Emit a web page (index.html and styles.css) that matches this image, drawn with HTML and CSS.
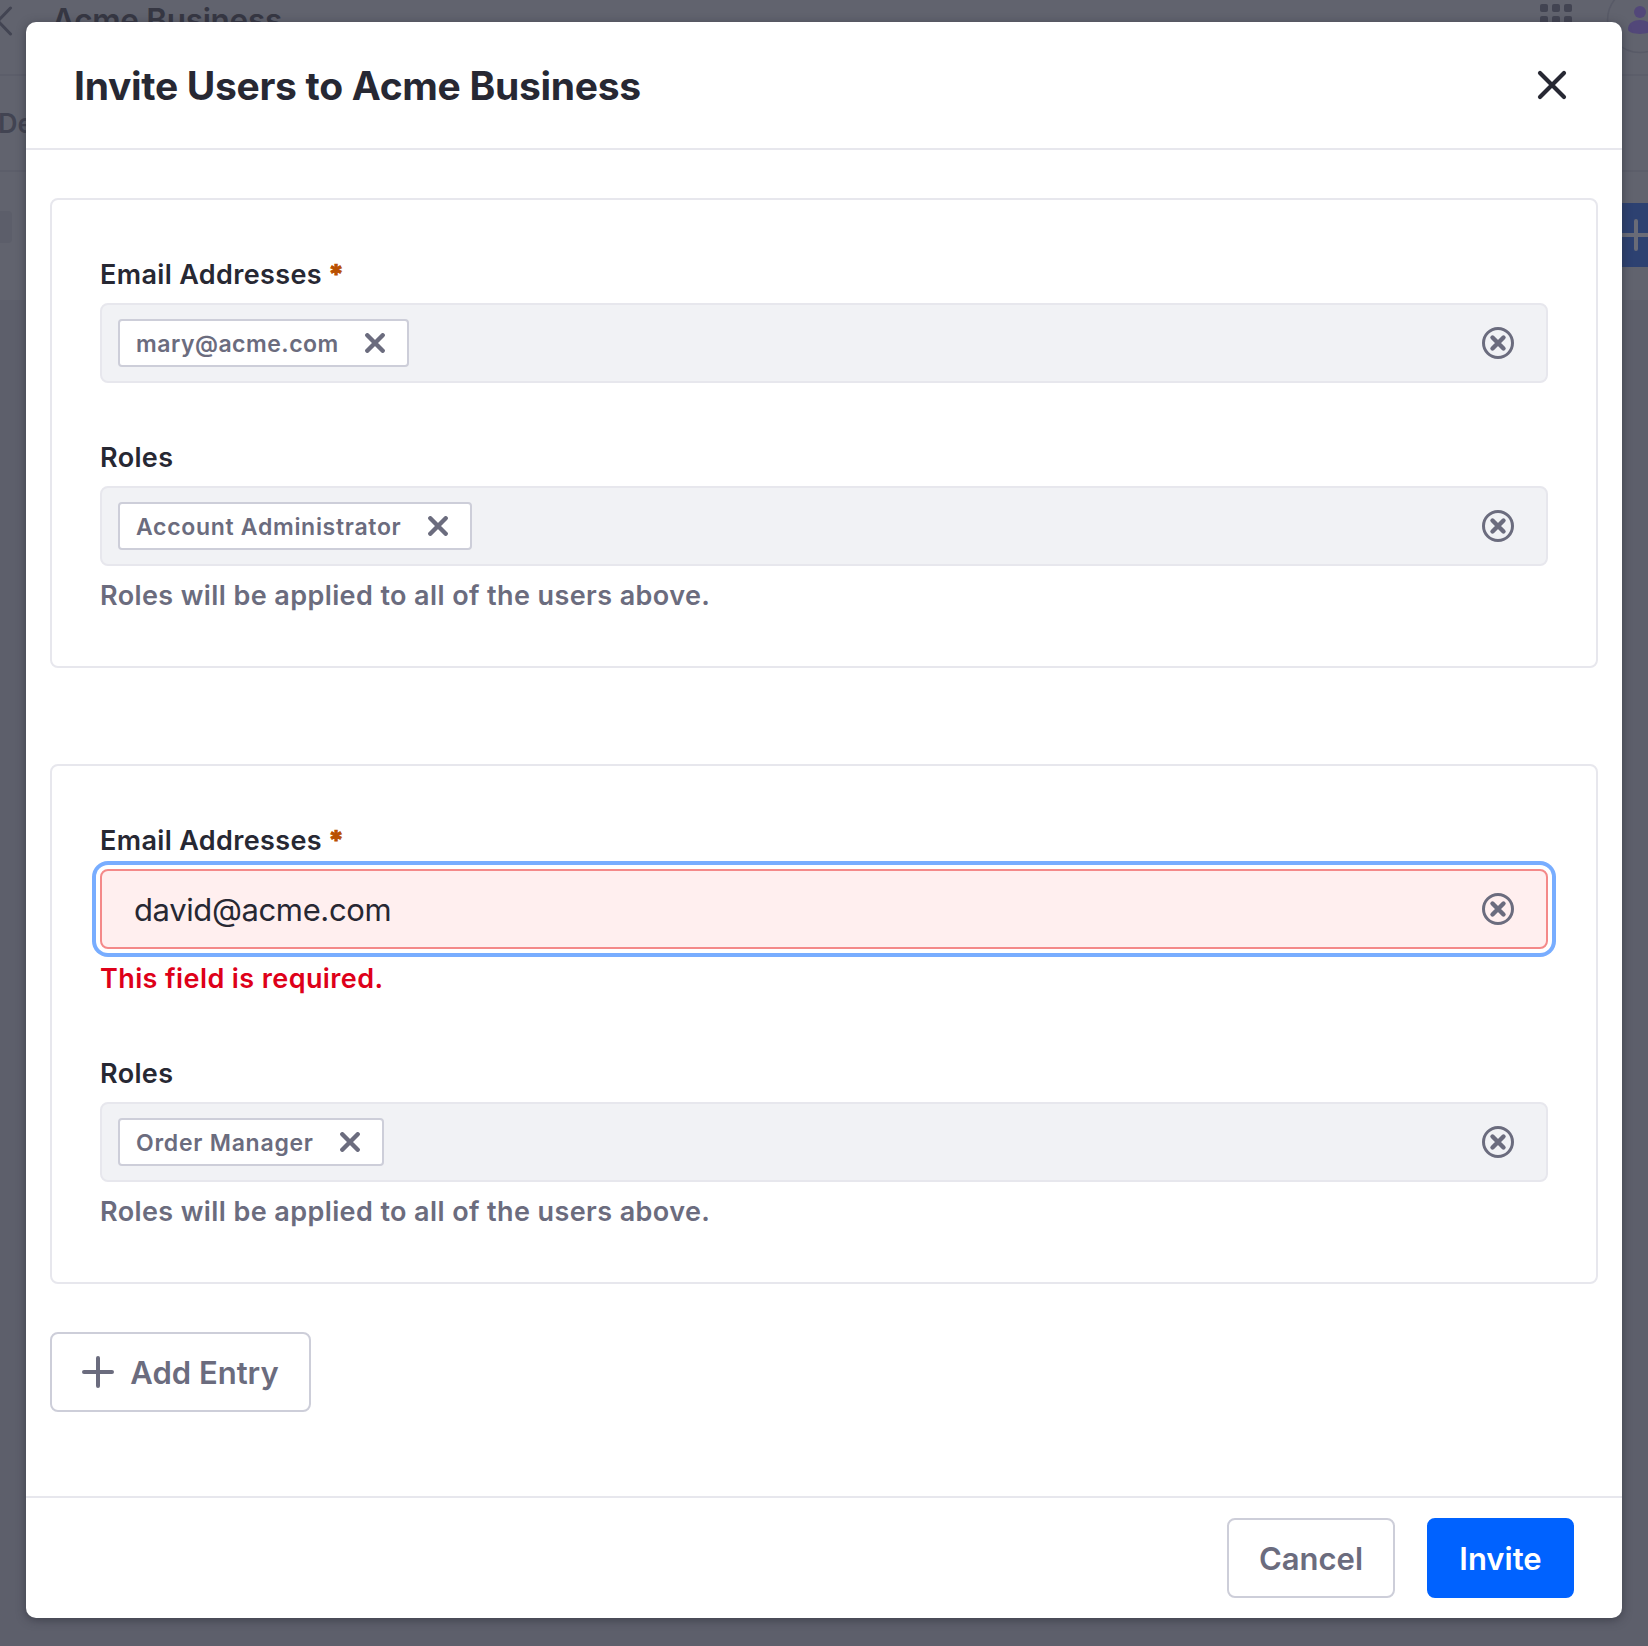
FILE: index.html
```html
<!DOCTYPE html>
<html lang="en">
<head>
<meta charset="utf-8">
<title>Invite Users to Acme Business</title>
<link rel="stylesheet" href="styles.css">
</head>
<body>
<svg class="sprite" width="0" height="0">
  <symbol id="times" viewBox="0 0 32 32"><path d="M4 4 28 28M28 4 4 28" fill="none" stroke="currentColor" stroke-width="4.2" stroke-linecap="round"/></symbol>
  <symbol id="times-small" viewBox="0 0 20 20"><path d="M2.3 2.3 17.7 17.7M17.7 2.3 2.3 17.7" fill="none" stroke="currentColor" stroke-width="4.4" stroke-linecap="round"/></symbol>
  <symbol id="times-circle" viewBox="0 0 32 32"><circle cx="16" cy="16" r="14.5" fill="none" stroke="currentColor" stroke-width="3"/><path d="M10.5 10.5 21.5 21.5M21.5 10.5 10.5 21.5" fill="none" stroke="currentColor" stroke-width="4.4" stroke-linecap="round"/></symbol>
  <symbol id="plus" viewBox="0 0 32 32"><path d="M16 2V30M2 16H30" fill="none" stroke="currentColor" stroke-width="4" stroke-linecap="round"/></symbol>
</svg>

<div class="page">
  <header class="app-bar">
    <svg class="back" width="16" height="32" viewBox="0 0 16 32"><path d="M10.500 3-2 16 10.500 29" fill="none" stroke="currentColor" stroke-width="3" stroke-linecap="round"/></svg>
    <span class="app-title">Acme Business</span>
    <svg class="apps" width="32" height="32" viewBox="0 0 32 32" fill="currentColor"><rect width="8" height="8" rx="2"/><rect x="12" width="8" height="8" rx="2"/><rect x="24" width="8" height="8" rx="2"/><rect y="12" width="8" height="8" rx="2"/><rect x="12" y="12" width="8" height="8" rx="2"/><rect x="24" y="12" width="8" height="8" rx="2"/></svg>
    <svg class="avatar" width="42" height="76" viewBox="0 0 42 76"><circle cx="34" cy="20" r="32.500" fill="none" stroke="#585a67" stroke-width="1.500"/><circle cx="34" cy="12" r="6" fill="#524779"/><path d="M22 29C22 17 46 17 46 29 46 35.500 22 35.500 22 29Z" fill="#524779"/></svg>
  </header>
  <nav class="tabs"><span>De</span></nav>
  <div class="toolbar">
    <span class="filter"></span>
    <span class="add"><svg width="32" height="32"><use href="#plus"/></svg></span>
  </div>
</div>

<div class="overlay">
  <section class="modal">
    <header class="modal-header">
      <h1>Invite Users to Acme Business</h1>
      <svg width="32" height="32"><use href="#times"/></svg>
    </header>
    <div class="modal-body">
      <div class="panel">
        <div class="label">Email Addresses <span class="req">*</span></div>
        <div class="field"><span class="tag tag-mary"><span>mary@acme.com</span><svg width="20" height="20"><use href="#times-small"/></svg></span><svg class="clear" width="32" height="32"><use href="#times-circle"/></svg></div>
        <div class="label next">Roles</div>
        <div class="field"><span class="tag tag-admin"><span>Account Administrator</span><svg width="20" height="20"><use href="#times-small"/></svg></span><svg class="clear" width="32" height="32"><use href="#times-circle"/></svg></div>
        <div class="hint">Roles will be applied to all of the users above.</div>
      </div>
      <div class="panel">
        <div class="label">Email Addresses <span class="req">*</span></div>
        <div class="field invalid"><span class="value">david@acme.com</span><svg class="clear" width="32" height="32"><use href="#times-circle"/></svg></div>
        <div class="hint error">This field is required.</div>
        <div class="label next">Roles</div>
        <div class="field"><span class="tag tag-order"><span>Order Manager</span><svg width="20" height="20"><use href="#times-small"/></svg></span><svg class="clear" width="32" height="32"><use href="#times-circle"/></svg></div>
        <div class="hint">Roles will be applied to all of the users above.</div>
      </div>
      <div class="btn add-entry"><svg width="32" height="32"><use href="#plus"/></svg><span>Add Entry</span></div>
    </div>
    <footer class="modal-footer">
      <div class="btn cancel"><span>Cancel</span></div>
      <div class="btn primary"><span>Invite</span></div>
    </footer>
  </section>
</div>
</body>
</html>
```
FILE: styles.css
```css
* { box-sizing: border-box; }
body {
  margin: 0;
  height: 1646px;
  overflow: hidden;
  background: #5d5f6b;
  color: #272833;
  font-family: Inter, "Liberation Sans", sans-serif;
}
svg { display: block; flex: none; }
.sprite { position: absolute; }

.page { background: #61636e; color: #424452; height: 300px; }
.app-bar {
  display: flex;
  height: 76px;
  border-bottom: 2px solid #5c5e6a;
}
.back { margin-top: 5px; }
.app-title {
  margin-left: 36px;
  font-size: 31.5px;
  font-weight: 600;
  letter-spacing: -.3px;
  line-height: 40px;
  color: #363743;
}
.apps { margin: 4px 34px 0 auto; }
.tabs {
  height: 96px;
  border-bottom: 2px solid #5c5e6a;
  font-size: 27px;
  font-weight: 600;
  line-height: 95px;
}
.tabs span { margin-left: -2px; }
.toolbar {
  display: flex;
  justify-content: space-between;
  align-items: center;
  height: 128px;
  padding-bottom: 2px;
}
.filter {
  width: 12px;
  height: 32px;
  margin-bottom: 16px;
  border-radius: 0 4px 4px 0;
  background: #5c5e6a;
}
.add {
  width: 44px;
  height: 64px;
  padding: 16px;
  overflow: hidden;
  background: #2d4171;
  color: #696b77;
}

.overlay {
  position: absolute;
  inset: 0;
  padding: 22px 26px 28px;
}
.modal {
  display: flex;
  flex-direction: column;
  height: 1596px;
  border-radius: 10px;
  background: #fff;
  box-shadow: 0 2px 10px rgba(39, 40, 51, .55);
}
.modal-header {
  display: flex;
  align-items: center;
  justify-content: space-between;
  height: 128px;
  padding: 0 54px 0 48px;
  border-bottom: 2px solid #e7e7ed;
}
h1 {
  margin: 2px 0 0;
  font-size: 39px;
  font-weight: 700;
  letter-spacing: -.3px;
  line-height: 48px;
}
.modal-body { flex: 1; padding: 48px 24px 0; }
.panel {
  padding: 48px;
  border: 2px solid #e7e7ed;
  border-radius: 8px;
}
.panel + .panel { margin-top: 96px; }
.label {
  height: 55px;
  font-size: 27px;
  font-weight: 600;
  letter-spacing: .36px;
  line-height: 54px;
  white-space: pre;
}
.next { margin-top: 48px; }
.req {
  margin-left: -1px;
  color: #b95000;
  font-weight: 800;
  -webkit-text-stroke: .7px #b95000;
}
.field {
  display: flex;
  align-items: center;
  justify-content: space-between;
  height: 80px;
  padding: 0 32px 0 16px;
  border: 2px solid #e7e7ed;
  border-radius: 8px;
  background: #f1f2f5;
}
.clear { color: #6b6c7e; }
.tag {
  display: flex;
  align-items: center;
  justify-content: space-between;
  height: 48px;
  padding: 0 22px 0 16px;
  border: 2px solid #cdced9;
  border-radius: 4px;
  background: #fff;
  color: #6b6c7e;
  font-size: 23px;
  font-weight: 600;
  line-height: 42px;
  white-space: nowrap;
}
.tag span { padding-top: 2px; }
.tag-mary { width: 291px; letter-spacing: .5px; }
.tag-admin { width: 354px; letter-spacing: .7px; }
.tag-order { width: 266px; letter-spacing: .75px; }
.invalid {
  border-color: #f48989;
  background: #ffefef;
  box-shadow: 0 0 0 4px #fff, 0 0 0 8px #78adff;
}
.value { margin-left: 16px; font-size: 31px; letter-spacing: -.38px; }
.hint {
  height: 52px;
  color: #6b6c7e;
  font-size: 27px;
  font-weight: 600;
  letter-spacing: .4px;
  line-height: 60px;
}
.error { height: 50px; color: #de0019; }
.btn {
  display: flex;
  align-items: center;
  justify-content: center;
  height: 80px;
  border: 2px solid #cdced9;
  border-radius: 8px;
  color: #6b6c7e;
  font-size: 31px;
  font-weight: 600;
}
.add-entry { width: 261px; margin-top: 48px; gap: 16px; }
.modal-footer {
  display: flex;
  justify-content: flex-end;
  gap: 32px;
  height: 122px;
  padding: 20px 48px 0;
  border-top: 2px solid #e7e7ed;
}
.cancel { width: 168px; }
.primary { width: 147px; background: #0062ff; border-color: #0062ff; color: #fff; }
```
